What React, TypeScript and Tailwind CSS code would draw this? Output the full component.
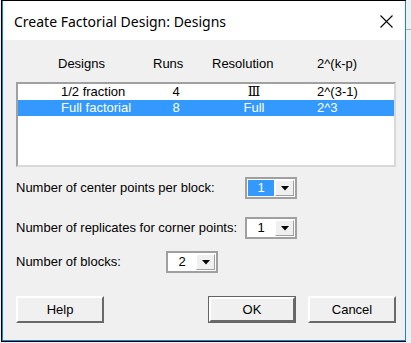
import React from "react";

function Combo({ value, selected, width }: { value: string; selected?: boolean; width: string }) {
  return (
    <div className={`flex h-[22px] ${width} border-2 border-[#a0a0a0] bg-white p-px`}>
      <div
        className={`flex-1 flex items-center justify-center text-[13px] ${
          selected ? "bg-[#3399ff] text-white" : "bg-white text-black"
        }`}
      >
        {value}
      </div>
      <div className="ml-px w-[19px] flex items-center justify-center bg-[#f0f0f0] border border-t-white border-l-white border-r-[#a0a0a0] border-b-[#a0a0a0]">
        <svg width="8" height="5" viewBox="0 0 8 5">
          <polygon points="0,0 8,0 4,4.5" fill="#000" />
        </svg>
      </div>
    </div>
  );
}

function Btn({ label, isDefault }: { label: string; isDefault?: boolean }) {
  return (
    <div className={`w-[88px] h-[27px] ${isDefault ? "border border-[#646464]" : ""} flex`}>
      <div className="flex-1 flex items-center justify-center bg-[#f0f0f0] border-2 border-t-white border-l-white border-r-[#696969] border-b-[#696969] text-[13px] text-black">
        {label}
      </div>
    </div>
  );
}

export default function App() {
  return (
    <div
      className="w-[411px] h-[343px] bg-[#f0f0f0] flex overflow-hidden"
      style={{ fontFamily: '"Liberation Sans", Arial, sans-serif' }}
    >
      <div className="ml-px w-[405px] h-[342px] border-l border-t border-b border-black flex flex-col">
        <div className="flex-1 flex flex-col border-l border-r border-b border-[#1883d7] bg-[#f0f0f0]">
          {/* title bar */}
          <div className="h-[39px] bg-white flex items-center justify-between pl-[11px] pr-[12px]">
            <span
              className="text-[14px] text-black mt-[1px]"
              style={{ fontFamily: '"Noto Sans", "Open Sans", sans-serif' }}
            >
              Create Factorial Design: Designs
            </span>
            <svg width="13" height="13" viewBox="0 0 13 13" className="mt-[2px]">
              <path d="M0.5 0.5 L12.5 12.5 M12.5 0.5 L0.5 12.5" stroke="#000" strokeWidth="1.1" />
            </svg>
          </div>

          {/* content */}
          <div className="flex flex-col pl-[13px] pr-[9px] pt-[16px]">
            {/* header */}
            <div className="flex h-[16px] items-center text-[13px] text-black">
              <div className="w-[42px]" />
              <div className="w-[95px]">Designs</div>
              <div className="w-[59px]">Runs</div>
              <div className="w-[105px]">Resolution</div>
              <div>2^(k-p)</div>
            </div>

            {/* list */}
            <div className="mt-[10px] w-[380px] h-[85px] border-2 border-t-[#a0a0a0] border-l-[#a0a0a0] border-r-[#d8d8d8] border-b-[#d8d8d8] bg-white flex flex-col">
              <div className="h-[16px] flex items-center text-[13px] text-black">
                <div className="w-[135px] pl-[43px]">1/2 fraction</div>
                <div className="w-[46px] text-center">4</div>
                <div
                  className="w-[110px] text-center text-[13px]"
                  style={{ fontFamily: '"DejaVu Serif", "Liberation Serif", serif' }}
                >
                  Ⅲ
                </div>
                <div className="pl-[8px]">2^(3-1)</div>
              </div>
              <div className="h-[16px] flex items-center text-[13px] text-white bg-[#3399ff]">
                <div className="w-[135px] pl-[43px]">Full factorial</div>
                <div className="w-[46px] text-center">8</div>
                <div className="w-[110px] text-center">Full</div>
                <div className="pl-[8px]">2^3</div>
              </div>
            </div>

            {/* options */}
            <div className="mt-[10px] flex items-center h-[22px]">
              <div className="w-[229px] text-[13px] text-black">Number of center points per block:</div>
              <Combo value="1" selected width="w-[52px]" />
            </div>
            <div className="mt-[18px] flex items-center h-[22px]">
              <div className="w-[229px] text-[13px] text-black">Number of replicates for corner points:</div>
              <Combo value="1" width="w-[52px]" />
            </div>
            <div className="mt-[12px] flex items-center h-[22px]">
              <div className="w-[150px] text-[13px] text-black">Number of blocks:</div>
              <Combo value="2" width="w-[52px]" />
            </div>

            {/* buttons */}
            <div className="mt-[23px] flex items-center">
              <Btn label="Help" />
              <div className="w-[104px]" />
              <Btn label="OK" isDefault />
              <div className="w-[12px]" />
              <Btn label="Cancel" />
            </div>
          </div>
        </div>
      </div>
      <div className="flex-1 flex flex-col">
        <div className="h-[29px]" />
        <div className="h-px bg-[#b0b0b0]" />
      </div>
    </div>
  );
}
